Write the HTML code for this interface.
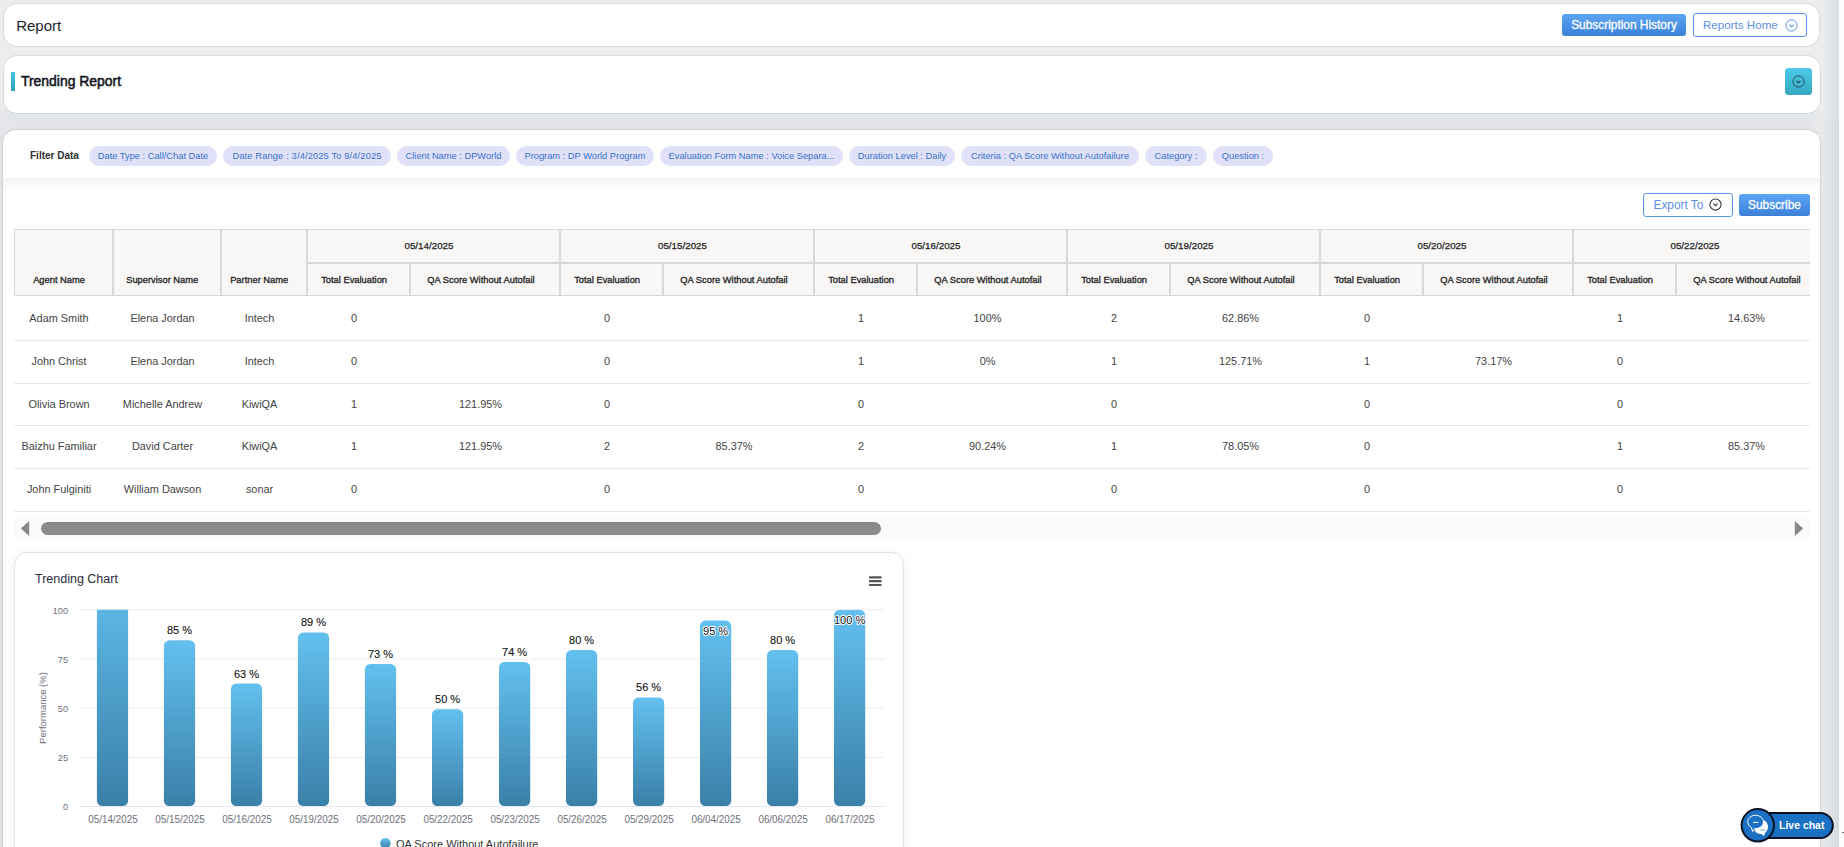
<!DOCTYPE html>
<html><head><meta charset="utf-8"><title>Report</title>
<style>
*{box-sizing:border-box;margin:0;padding:0}
html,body{width:1844px;height:847px;overflow:hidden}
body{background:#ebedef;font-family:"Liberation Sans",sans-serif;position:relative;color:#212529}
.abs{position:absolute}
.card{position:absolute;background:#fff;border-radius:13px;box-shadow:0 0 0 .8px rgba(20,40,60,.07),0 0 3px rgba(20,40,60,.07)}
.pill{position:absolute;top:146px;height:20px;border-radius:10px;background:#e0e1f8;color:#3673cc;font-size:9.3px;line-height:20px;text-align:center;white-space:nowrap}
.th span{display:inline-block;transform:scaleX(.995)}
.th{position:absolute;background:#f8f7f6;border:1px solid #d6d9dc;font-size:9.4px;-webkit-text-stroke:.3px #222;color:#222;text-align:center;white-space:nowrap}
.td{position:absolute;font-size:10.9px;color:#444;text-align:center;white-space:nowrap;height:14px;line-height:14px}
.rl{position:absolute;left:14px;width:1796px;height:1px;background:#e4e7ed}
</style></head><body>

<div class="abs" style="left:1839px;top:0;width:5px;height:847px;background:#fcfcfc"></div>
<div class="abs" style="left:1822px;top:0;width:17px;height:847px;background:linear-gradient(90deg,rgba(20,40,60,0),rgba(20,40,60,.075))"></div>
<div class="abs" style="left:0;top:110px;width:1839px;height:24px;background:linear-gradient(90deg,rgba(20,30,40,.035) 0,rgba(20,30,40,.035) 1810px,rgba(20,30,40,0) 1828px)"></div>
<div class="abs" style="left:0;top:134px;width:4px;height:713px;background:rgba(20,30,40,.035)"></div>
<div class="abs" style="left:1820px;top:120px;width:19px;height:727px;background:rgba(20,30,40,.012)"></div>
<div class="card" style="left:3.6px;top:3.6px;width:1815.8px;height:42.6px"></div>
<div class="abs" style="left:16.2px;top:16.5px;font-size:15px;line-height:18px;color:#1c1f2e">Report</div>
<div class="abs" style="left:1562px;top:14px;width:124px;height:22px;border-radius:3px;background:linear-gradient(#5da5f4,#4086de 85%,#3d80d6);color:#fff;font-size:11.9px;-webkit-text-stroke:.3px #fff;line-height:22.6px;text-align:center">Subscription History</div>
<div class="abs" style="left:1693px;top:13px;width:114px;height:24px;border-radius:3px;border:1px solid #5b93ea;background:#fff;color:#5b8fe6;font-size:11.6px;line-height:22px;padding-left:9px">Reports Home</div>
<svg class="abs" style="left:1784.5px;top:18.8px" width="13" height="13" viewBox="0 0 13 13"><circle cx="6.5" cy="6.5" r="5.6" fill="none" stroke="#5b8fe6" stroke-width="1"/><path d="M4.3 5.6 L6.5 7.8 L8.7 5.6" fill="none" stroke="#5b8fe6" stroke-width="1.1"/></svg>
<div class="card" style="left:3.5px;top:56.2px;width:1816.3px;height:56.8px"></div>
<div class="abs" style="left:11px;top:72px;width:4px;height:19px;background:linear-gradient(#45c3e0,#2fa3bd)"></div>
<div class="abs" style="left:21px;top:72px;font-size:14.5px;-webkit-text-stroke:.55px #15151f;line-height:18px;color:#15151f;transform:scaleX(.96);transform-origin:0 0;white-space:nowrap">Trending Report</div>
<div class="abs" style="left:1785px;top:68px;width:27px;height:27px;border-radius:3.5px;background:linear-gradient(#4ccbe8,#35a7c1)"></div>
<svg class="abs" style="left:1792.35px;top:75.4px" width="13" height="13" viewBox="0 0 13 13"><circle cx="6.5" cy="6.5" r="5.6" fill="none" stroke="#22505c" stroke-width="1"/><path d="M4.5 5.9 L6.5 7.6 L8.5 5.9" fill="none" stroke="#1d3b44" stroke-width="1.1"/></svg>
<div class="card" style="left:3.2px;top:129.8px;width:1816.8px;height:740px;border-radius:13px 13px 0 0;box-shadow:0 0 0 .8px rgba(20,40,60,.08),0 0 4px rgba(20,40,60,.08)"></div>
<div class="abs" style="left:3px;top:178px;width:1817px;height:14px;background:linear-gradient(rgba(0,0,0,.045),rgba(0,0,0,0))"></div>
<div class="abs" style="left:30px;top:149px;font-size:10px;font-weight:bold;line-height:14px;color:#303030">Filter Data</div>
<div class="pill" style="left:89px;width:128px">Date Type : Call/Chat Date</div>
<div class="pill" style="left:223px;width:168px;letter-spacing:.14px">Date Range : 3/4/2025 To 9/4/2025</div>
<div class="pill" style="left:397px;width:113px">Client Name : DPWorld</div>
<div class="pill" style="left:516px;width:138px">Program : DP World Program</div>
<div class="pill" style="left:660px;width:183px">Evaluation Form Name : Voice Separa...</div>
<div class="pill" style="left:849px;width:106px">Duration Level : Daily</div>
<div class="pill" style="left:961px;width:178px">Criteria : QA Score Without Autofailure</div>
<div class="pill" style="left:1145px;width:62px">Category :</div>
<div class="pill" style="left:1213px;width:60px">Question :</div>
<div class="abs" style="left:1643px;top:193px;width:90px;height:24px;border-radius:3px;border:1px solid #5b93ea;background:#fff;color:#5b8fe6;font-size:11.85px;line-height:22px;padding-left:9.5px">Export To</div>
<svg class="abs" style="left:1709.3px;top:198.2px" width="13" height="13" viewBox="0 0 13 13"><circle cx="6.5" cy="6.5" r="5.6" fill="none" stroke="#303030" stroke-width="1.05"/><path d="M4.4 5.7 L6.5 7.7 L8.6 5.7" fill="none" stroke="#303030" stroke-width="1.1"/></svg>
<div class="abs" style="left:1739px;top:194px;width:71px;height:22px;border-radius:3px;background:linear-gradient(#5da5f4,#4086de 85%,#3d80d6);color:#fff;font-size:11.9px;-webkit-text-stroke:.3px #fff;line-height:23px;text-align:center">Subscribe</div>
<div class="abs" style="left:0;top:0;width:1810px;height:847px;overflow:hidden">
<div class="th" style="left:14px;top:229px;width:99px;height:67px;padding:43.2px 9px 0 0;line-height:13px"><span>Agent Name</span></div>
<div class="th" style="left:113px;top:229px;width:108px;height:67px;padding:43.2px 9px 0 0;line-height:13px"><span>Supervisor Name</span></div>
<div class="th" style="left:221px;top:229px;width:86px;height:67px;padding:43.2px 9px 0 0;line-height:13px"><span>Partner Name</span></div>
<div class="th" style="left:307px;top:229px;width:253px;height:34px;line-height:32.4px;font-size:9.8px;-webkit-text-stroke:.25px #222;padding-right:9px">05/14/2025</div>
<div class="th" style="left:307px;top:263px;width:103px;height:33px;line-height:31px;padding-right:9px"><span>Total Evaluation</span></div>
<div class="th" style="left:410px;top:263px;width:150px;height:33px;line-height:31px;padding-right:9px"><span>QA Score Without Autofail</span></div>
<div class="th" style="left:560px;top:229px;width:254px;height:34px;line-height:32.4px;font-size:9.8px;-webkit-text-stroke:.25px #222;padding-right:9px">05/15/2025</div>
<div class="th" style="left:560px;top:263px;width:103px;height:33px;line-height:31px;padding-right:9px"><span>Total Evaluation</span></div>
<div class="th" style="left:663px;top:263px;width:151px;height:33px;line-height:31px;padding-right:9px"><span>QA Score Without Autofail</span></div>
<div class="th" style="left:814px;top:229px;width:253px;height:34px;line-height:32.4px;font-size:9.8px;-webkit-text-stroke:.25px #222;padding-right:9px">05/16/2025</div>
<div class="th" style="left:814px;top:263px;width:103px;height:33px;line-height:31px;padding-right:9px"><span>Total Evaluation</span></div>
<div class="th" style="left:917px;top:263px;width:150px;height:33px;line-height:31px;padding-right:9px"><span>QA Score Without Autofail</span></div>
<div class="th" style="left:1067px;top:229px;width:253px;height:34px;line-height:32.4px;font-size:9.8px;-webkit-text-stroke:.25px #222;padding-right:9px">05/19/2025</div>
<div class="th" style="left:1067px;top:263px;width:103px;height:33px;line-height:31px;padding-right:9px"><span>Total Evaluation</span></div>
<div class="th" style="left:1170px;top:263px;width:150px;height:33px;line-height:31px;padding-right:9px"><span>QA Score Without Autofail</span></div>
<div class="th" style="left:1320px;top:229px;width:253px;height:34px;line-height:32.4px;font-size:9.8px;-webkit-text-stroke:.25px #222;padding-right:9px">05/20/2025</div>
<div class="th" style="left:1320px;top:263px;width:103px;height:33px;line-height:31px;padding-right:9px"><span>Total Evaluation</span></div>
<div class="th" style="left:1423px;top:263px;width:150px;height:33px;line-height:31px;padding-right:9px"><span>QA Score Without Autofail</span></div>
<div class="th" style="left:1573px;top:229px;width:253px;height:34px;line-height:32.4px;font-size:9.8px;-webkit-text-stroke:.25px #222;padding-right:9px">05/22/2025</div>
<div class="th" style="left:1573px;top:263px;width:103px;height:33px;line-height:31px;padding-right:9px"><span>Total Evaluation</span></div>
<div class="th" style="left:1676px;top:263px;width:150px;height:33px;line-height:31px;padding-right:9px"><span>QA Score Without Autofail</span></div>
<div class="td" style="left:-21.0px;width:160px;top:311.2px">Adam Smith</div>
<div class="td" style="left:82.5px;width:160px;top:311.2px">Elena Jordan</div>
<div class="td" style="left:179.5px;width:160px;top:311.2px">Intech</div>
<div class="td" style="left:274.0px;width:160px;top:311.2px">0</div>
<div class="td" style="left:527.0px;width:160px;top:311.2px">0</div>
<div class="td" style="left:781.0px;width:160px;top:311.2px">1</div>
<div class="td" style="left:907.5px;width:160px;top:311.2px">100%</div>
<div class="td" style="left:1034.0px;width:160px;top:311.2px">2</div>
<div class="td" style="left:1160.5px;width:160px;top:311.2px">62.86%</div>
<div class="td" style="left:1287.0px;width:160px;top:311.2px">0</div>
<div class="td" style="left:1540.0px;width:160px;top:311.2px">1</div>
<div class="td" style="left:1666.5px;width:160px;top:311.2px">14.63%</div>
<div class="rl" style="top:340px"></div>
<div class="td" style="left:-21.0px;width:160px;top:354.2px">John Christ</div>
<div class="td" style="left:82.5px;width:160px;top:354.2px">Elena Jordan</div>
<div class="td" style="left:179.5px;width:160px;top:354.2px">Intech</div>
<div class="td" style="left:274.0px;width:160px;top:354.2px">0</div>
<div class="td" style="left:527.0px;width:160px;top:354.2px">0</div>
<div class="td" style="left:781.0px;width:160px;top:354.2px">1</div>
<div class="td" style="left:907.5px;width:160px;top:354.2px">0%</div>
<div class="td" style="left:1034.0px;width:160px;top:354.2px">1</div>
<div class="td" style="left:1160.5px;width:160px;top:354.2px">125.71%</div>
<div class="td" style="left:1287.0px;width:160px;top:354.2px">1</div>
<div class="td" style="left:1413.5px;width:160px;top:354.2px">73.17%</div>
<div class="td" style="left:1540.0px;width:160px;top:354.2px">0</div>
<div class="rl" style="top:383px"></div>
<div class="td" style="left:-21.0px;width:160px;top:397.2px">Olivia Brown</div>
<div class="td" style="left:82.5px;width:160px;top:397.2px">Michelle Andrew</div>
<div class="td" style="left:179.5px;width:160px;top:397.2px">KiwiQA</div>
<div class="td" style="left:274.0px;width:160px;top:397.2px">1</div>
<div class="td" style="left:400.5px;width:160px;top:397.2px">121.95%</div>
<div class="td" style="left:527.0px;width:160px;top:397.2px">0</div>
<div class="td" style="left:781.0px;width:160px;top:397.2px">0</div>
<div class="td" style="left:1034.0px;width:160px;top:397.2px">0</div>
<div class="td" style="left:1287.0px;width:160px;top:397.2px">0</div>
<div class="td" style="left:1540.0px;width:160px;top:397.2px">0</div>
<div class="rl" style="top:425px"></div>
<div class="td" style="left:-21.0px;width:160px;top:439.2px">Baizhu Familiar</div>
<div class="td" style="left:82.5px;width:160px;top:439.2px">David Carter</div>
<div class="td" style="left:179.5px;width:160px;top:439.2px">KiwiQA</div>
<div class="td" style="left:274.0px;width:160px;top:439.2px">1</div>
<div class="td" style="left:400.5px;width:160px;top:439.2px">121.95%</div>
<div class="td" style="left:527.0px;width:160px;top:439.2px">2</div>
<div class="td" style="left:654.0px;width:160px;top:439.2px">85.37%</div>
<div class="td" style="left:781.0px;width:160px;top:439.2px">2</div>
<div class="td" style="left:907.5px;width:160px;top:439.2px">90.24%</div>
<div class="td" style="left:1034.0px;width:160px;top:439.2px">1</div>
<div class="td" style="left:1160.5px;width:160px;top:439.2px">78.05%</div>
<div class="td" style="left:1287.0px;width:160px;top:439.2px">0</div>
<div class="td" style="left:1540.0px;width:160px;top:439.2px">1</div>
<div class="td" style="left:1666.5px;width:160px;top:439.2px">85.37%</div>
<div class="rl" style="top:468px"></div>
<div class="td" style="left:-21.0px;width:160px;top:482.2px">John Fulginiti</div>
<div class="td" style="left:82.5px;width:160px;top:482.2px">William Dawson</div>
<div class="td" style="left:179.5px;width:160px;top:482.2px">sonar</div>
<div class="td" style="left:274.0px;width:160px;top:482.2px">0</div>
<div class="td" style="left:527.0px;width:160px;top:482.2px">0</div>
<div class="td" style="left:781.0px;width:160px;top:482.2px">0</div>
<div class="td" style="left:1034.0px;width:160px;top:482.2px">0</div>
<div class="td" style="left:1287.0px;width:160px;top:482.2px">0</div>
<div class="td" style="left:1540.0px;width:160px;top:482.2px">0</div>
<div class="rl" style="top:511px"></div>
</div>
<div class="abs" style="left:14px;top:517px;width:1796px;height:23px;background:#fbfbfb"></div>
<div class="abs" style="left:41px;top:522px;width:840px;height:13px;border-radius:6.5px;background:#8a8a8a"></div>
<svg class="abs" style="left:20px;top:520px" width="10" height="17"><path d="M9.2 1 L0.8 8.5 L9.2 16 Z" fill="#8a8a8a"/></svg>
<svg class="abs" style="left:1794px;top:520px" width="10" height="17"><path d="M0.8 1 L9.2 8.5 L0.8 16 Z" fill="#8a8a8a"/></svg>
<div class="abs" style="left:14px;top:552px;width:890px;height:320px;border:1px solid #dfe5ea;border-radius:13px;background:#fff;box-shadow:0 2px 12px rgba(0,0,0,.07)"></div>
<div class="abs" style="left:35px;top:571px;font-size:12.5px;line-height:16px;color:#2a2b3c">Trending Chart</div>
<svg class="abs" style="left:0;top:540px" width="920" height="307" viewBox="0 540 920 307" font-family="Liberation Sans, sans-serif"><defs><linearGradient id="bg" x1="0" y1="0" x2="0" y2="1"><stop offset="0" stop-color="#63c0ef"/><stop offset="1" stop-color="#3a80a8"/></linearGradient><clipPath id="cp"><rect x="79" y="609.8" width="806" height="200"/></clipPath></defs><line x1="79" x2="884" y1="609.8" y2="609.8" stroke="#ececef" stroke-width="1"/><text x="68" y="613.5999999999999" font-size="9.2" fill="#6e7079" text-anchor="end">100</text><line x1="79" x2="884" y1="659.0" y2="659.0" stroke="#ececef" stroke-width="1"/><text x="68" y="662.8" font-size="9.2" fill="#6e7079" text-anchor="end">75</text><line x1="79" x2="884" y1="708.2" y2="708.2" stroke="#ececef" stroke-width="1"/><text x="68" y="712.0" font-size="9.2" fill="#6e7079" text-anchor="end">50</text><line x1="79" x2="884" y1="757.4" y2="757.4" stroke="#ececef" stroke-width="1"/><text x="68" y="761.1999999999999" font-size="9.2" fill="#6e7079" text-anchor="end">25</text><line x1="79" x2="884" y1="806.6" y2="806.6" stroke="#dfe3ee" stroke-width="1"/><text x="68" y="810.4" font-size="9.2" fill="#6e7079" text-anchor="end">0</text><text transform="translate(46,708) rotate(-90)" font-size="9.5" fill="#6e7079" text-anchor="middle">Performance (%)</text><g clip-path="url(#cp)"><rect x="96.9" y="567.5" width="31.2" height="238.5" rx="5.5" fill="url(#bg)"/><rect x="163.9" y="640.3" width="31.2" height="165.7" rx="5.5" fill="url(#bg)"/><rect x="230.9" y="683.6" width="31.2" height="122.4" rx="5.5" fill="url(#bg)"/><rect x="297.9" y="632.4" width="31.2" height="173.6" rx="5.5" fill="url(#bg)"/><rect x="364.9" y="663.9" width="31.2" height="142.1" rx="5.5" fill="url(#bg)"/><rect x="432.0" y="709.2" width="31.2" height="96.8" rx="5.5" fill="url(#bg)"/><rect x="499.0" y="662.0" width="31.2" height="144.0" rx="5.5" fill="url(#bg)"/><rect x="566.0" y="650.1" width="31.2" height="155.9" rx="5.5" fill="url(#bg)"/><rect x="633.0" y="697.4" width="31.2" height="108.6" rx="5.5" fill="url(#bg)"/><rect x="700.0" y="620.6" width="31.2" height="185.4" rx="5.5" fill="url(#bg)"/><rect x="767.0" y="650.1" width="31.2" height="155.9" rx="5.5" fill="url(#bg)"/><rect x="834.0" y="609.8" width="31.2" height="196.2" rx="5.5" fill="url(#bg)"/></g><text x="113.0" y="822.7" font-size="10.7" fill="#6e7079" text-anchor="middle" textLength="49.4" lengthAdjust="spacingAndGlyphs">05/14/2025</text><text x="180.0" y="822.7" font-size="10.7" fill="#6e7079" text-anchor="middle" textLength="49.4" lengthAdjust="spacingAndGlyphs">05/15/2025</text><text x="179.5" y="634.3" font-size="11" fill="#111" stroke="#111" stroke-width=".1" text-anchor="middle">85 %</text><text x="247.0" y="822.7" font-size="10.7" fill="#6e7079" text-anchor="middle" textLength="49.4" lengthAdjust="spacingAndGlyphs">05/16/2025</text><text x="246.5" y="677.6" font-size="11" fill="#111" stroke="#111" stroke-width=".1" text-anchor="middle">63 %</text><text x="314.0" y="822.7" font-size="10.7" fill="#6e7079" text-anchor="middle" textLength="49.4" lengthAdjust="spacingAndGlyphs">05/19/2025</text><text x="313.5" y="626.4" font-size="11" fill="#111" stroke="#111" stroke-width=".1" text-anchor="middle">89 %</text><text x="381.0" y="822.7" font-size="10.7" fill="#6e7079" text-anchor="middle" textLength="49.4" lengthAdjust="spacingAndGlyphs">05/20/2025</text><text x="380.5" y="657.9" font-size="11" fill="#111" stroke="#111" stroke-width=".1" text-anchor="middle">73 %</text><text x="448.1" y="822.7" font-size="10.7" fill="#6e7079" text-anchor="middle" textLength="49.4" lengthAdjust="spacingAndGlyphs">05/22/2025</text><text x="447.6" y="703.2" font-size="11" fill="#111" stroke="#111" stroke-width=".1" text-anchor="middle">50 %</text><text x="515.1" y="822.7" font-size="10.7" fill="#6e7079" text-anchor="middle" textLength="49.4" lengthAdjust="spacingAndGlyphs">05/23/2025</text><text x="514.6" y="656.0" font-size="11" fill="#111" stroke="#111" stroke-width=".1" text-anchor="middle">74 %</text><text x="582.1" y="822.7" font-size="10.7" fill="#6e7079" text-anchor="middle" textLength="49.4" lengthAdjust="spacingAndGlyphs">05/26/2025</text><text x="581.6" y="644.1" font-size="11" fill="#111" stroke="#111" stroke-width=".1" text-anchor="middle">80 %</text><text x="649.1" y="822.7" font-size="10.7" fill="#6e7079" text-anchor="middle" textLength="49.4" lengthAdjust="spacingAndGlyphs">05/29/2025</text><text x="648.6" y="691.4" font-size="11" fill="#111" stroke="#111" stroke-width=".1" text-anchor="middle">56 %</text><text x="716.1" y="822.7" font-size="10.7" fill="#6e7079" text-anchor="middle" textLength="49.4" lengthAdjust="spacingAndGlyphs">06/04/2025</text><text x="715.6" y="635.2" font-size="11" fill="#111" stroke="#fff" stroke-width="2" stroke-linejoin="round" paint-order="stroke" text-anchor="middle">95 %</text><text x="783.1" y="822.7" font-size="10.7" fill="#6e7079" text-anchor="middle" textLength="49.4" lengthAdjust="spacingAndGlyphs">06/06/2025</text><text x="782.6" y="644.1" font-size="11" fill="#111" stroke="#111" stroke-width=".1" text-anchor="middle">80 %</text><text x="850.1" y="822.7" font-size="10.7" fill="#6e7079" text-anchor="middle" textLength="49.4" lengthAdjust="spacingAndGlyphs">06/17/2025</text><text x="849.6" y="624.4" font-size="11" fill="#111" stroke="#fff" stroke-width="2" stroke-linejoin="round" paint-order="stroke" text-anchor="middle">100 %</text><rect x="869" y="576.2" width="12.6" height="2.2" rx="0.6" fill="#555"/><rect x="869" y="580.0500000000001" width="12.6" height="2.2" rx="0.6" fill="#555"/><rect x="869" y="583.9000000000001" width="12.6" height="2.2" rx="0.6" fill="#555"/><circle cx="385.4" cy="843.3" r="5.3" fill="url(#bg)"/><text x="396" y="847.5" font-size="11" fill="#333">QA Score Without Autofailure</text></svg>
<svg class="abs" style="left:1736px;top:802px" width="108" height="45" viewBox="1736 802 108 45"><rect x="1750" y="813" width="82.8" height="25" rx="12.5" fill="#1a70c2" stroke="#0b1322" stroke-width="2"/><circle cx="1757.8" cy="825.3" r="16.2" fill="#1a70c2" stroke="#0b1322" stroke-width="2"/><path d="M1759.5 819.6 C1764.8 819.2 1768.2 823 1768 827 C1767.9 829.6 1766.8 831.4 1765.3 832.6 L1764 836 L1761.2 834 C1758 834 1755.8 832.6 1754.6 830.8 Z" fill="#fff"/><path d="M1755.6 815.3 C1760 815.3 1763.4 818.2 1763.4 821.9 C1763.4 825.6 1760 828.5 1755.6 828.5 C1755.2 828.5 1754.9 828.5 1754.5 828.4 L1752.7 831.6 L1751.2 827.3 C1749.2 826.1 1747.8 824.1 1747.8 821.9 C1747.8 818.2 1751.2 815.3 1755.6 815.3 Z" fill="#1a70c2" stroke="#fff" stroke-width="1" stroke-linejoin="round"/><line x1="1753" y1="822.4" x2="1758.3" y2="822.4" stroke="#fff" stroke-width="1.1"/><line x1="1760.3" y1="830.1" x2="1765.6" y2="830.1" stroke="#86b8ea" stroke-width="1.3"/><rect x="1842.3" y="832" width="1.7" height="1" fill="#555"/></svg>
<div class="abs" style="left:1778.7px;top:817.5px;font-size:11.4px;font-weight:bold;color:#fff;line-height:15px;white-space:nowrap;transform:scaleX(.92);transform-origin:0 0">Live chat</div>
</body></html>
